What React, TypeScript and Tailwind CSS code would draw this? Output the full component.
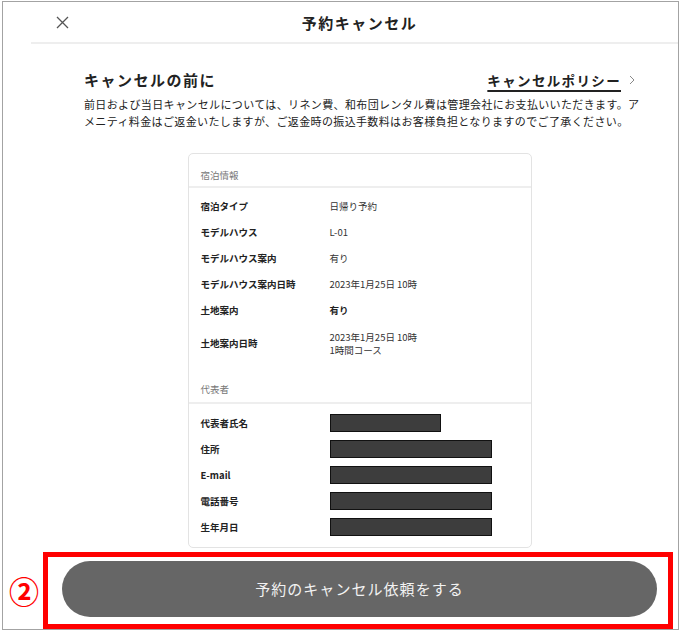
import React from "react";

const infoRows: { label: string; value: React.ReactNode; bold?: boolean }[] = [
  { label: "宿泊タイプ", value: "日帰り予約" },
  { label: "モデルハウス", value: "L-01" },
  { label: "モデルハウス案内", value: "有り" },
  { label: "モデルハウス案内日時", value: "2023年1月25日 10時" },
  { label: "土地案内", value: "有り", bold: true },
];

const repRows: { label: string; w: string }[] = [
  { label: "代表者氏名", w: "w-[111px]" },
  { label: "住所", w: "w-[162px]" },
  { label: "E-mail", w: "w-[162px]" },
  { label: "電話番号", w: "w-[162px]" },
  { label: "生年月日", w: "w-[162px]" },
];

export default function App() {
  return (
    <div className="relative w-[683px] h-[638px] bg-white font-['Noto_Sans_CJK_JP','Noto_Sans',sans-serif] text-[#222]">
      <div className="ml-[2px] mt-[1px] w-[677px] h-[629px] border border-[#a3a3a3] overflow-hidden">
        <div className="ml-[28px] w-[657px] flex flex-col">
          {/* header */}
          <div className="h-[42px] border-b-2 border-[#eeeeee] grid grid-cols-[1fr_auto_1fr] items-center">
            <div className="pl-[25px] flex items-center">
              <svg width="13" height="13" viewBox="0 0 13 13">
                <path d="M1 1L12 12M12 1L1 12" stroke="#555" strokeWidth="1.3" fill="none" />
              </svg>
            </div>
            <div className="text-[15px] font-bold tracking-[0.1em] leading-[20px] text-[#222] pt-[1px]">予約キャンセル</div>
            <div />
          </div>

          {/* body */}
          <div className="px-[53px]">
            <div className="mt-[26px] h-[20px] flex items-center justify-between">
              <div className="text-[15px] font-bold tracking-[0.1em] leading-[20px]">キャンセルの前に</div>
              <div className="flex items-center gap-[8px]">
                <span className="text-[13.5px] font-bold tracking-[0.1em] leading-[20px] underline decoration-[1.5px] underline-offset-[4px]">
                  キャンセルポリシー
                </span>
                <svg width="6" height="10" viewBox="0 0 6 10">
                  <path d="M1 1L5 5L1 9" stroke="#888" strokeWidth="1" fill="none" />
                </svg>
              </div>
            </div>
            <div className="mt-[6px] text-[11px] leading-[17px] tracking-[0.37px] text-[#222] whitespace-nowrap">
              <div>前日および当日キャンセルについては、リネン費、和布団レンタル費は管理会社にお支払いいただきます。ア</div>
              <div>メニティ料金はご返金いたしますが、ご返金時の振込手数料はお客様負担となりますのでご了承ください。</div>
            </div>
          </div>

          {/* card */}
          <div className="mt-[23px] mx-auto w-[344px] border border-[#e3e3e3] rounded-[5px] text-[9.5px]">
            <div className="pl-[12px] pt-[15px] pb-[5px] leading-[12px] text-[#777] border-b-2 border-[#eeeeee]">宿泊情報</div>
            <div className="pt-[5px]">
              {infoRows.map((r) => (
                <div key={r.label} className="h-[26px] flex items-center pl-[12px]">
                  <div className="w-[129px] font-bold">{r.label}</div>
                  <div className={r.bold ? "font-bold" : "text-[#333]"}>{r.value}</div>
                </div>
              ))}
              <div className="h-[41px] flex items-center pl-[12px]">
                <div className="w-[129px] font-bold">土地案内日時</div>
                <div className="leading-[13px] text-[#333]">
                  <div>2023年1月25日 10時</div>
                  <div>1時間コース</div>
                </div>
              </div>
            </div>
            <div className="pl-[12px] pt-[19px] pb-[7px] leading-[12px] text-[#777] border-b-2 border-[#eeeeee]">代表者</div>
            <div className="pt-[6px] pb-[7px]">
              {repRows.map((r) => (
                <div key={r.label} className="h-[26px] flex items-center pl-[12px]">
                  <div className="w-[129px] font-bold">{r.label}</div>
                  <div className={`${r.w} h-[18px] bg-[#3d3d3d] border border-[#111]`} />
                </div>
              ))}
            </div>
          </div>

          {/* button */}
          <div className="mt-[13px] mx-auto w-[595px] h-[56px] rounded-full bg-[#666666] flex items-center justify-center text-[15px] tracking-[0.07em] text-[#f2f2f2]">
            予約のキャンセル依頼をする
          </div>
        </div>
      </div>

      {/* annotation */}
      <div className="absolute left-[43px] top-[551px] w-[630px] h-[77px] border-[5px] border-[#ff0000]" />
      <div className="absolute left-[9px] top-[569px] text-[30px] leading-[40px] font-bold text-[#ff0000]">②</div>
    </div>
  );
}
